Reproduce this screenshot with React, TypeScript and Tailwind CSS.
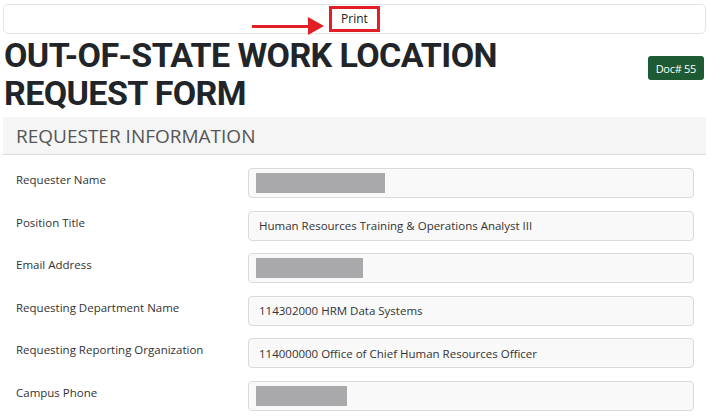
import React from "react";

const ROWS: { label: string; value?: string; redact?: number }[] = [
  { label: "Requester Name", redact: 129 },
  { label: "Position Title", value: "Human Resources Training & Operations Analyst III" },
  { label: "Email Address", redact: 107 },
  { label: "Requesting Department Name", value: "114302000 HRM Data Systems" },
  { label: "Requesting Reporting Organization", value: "114000000 Office of Chief Human Resources Officer" },
  { label: "Campus Phone", redact: 91 },
];

export default function App() {
  return (
    <div className="px-[3px] pt-[4px] bg-white text-[#333]" style={{ fontFamily: '"Open Sans", "Noto Sans", sans-serif' }}>
      {/* print bar */}
      <div className="relative h-[30px] border border-[#e3e3e3] rounded-[5px] flex justify-center">
        <div className="relative">
          <div className="absolute right-[56px] top-[12px] flex items-center">
            <div className="w-[57px] h-[3px] bg-[#e21f26]" />
            <svg width="16" height="18" viewBox="0 0 16 18" className="-ml-[1px]">
              <polygon points="0,0 16,9 0,18" fill="#e21f26" />
            </svg>
          </div>
          <button className="-mt-[1px] h-[26px] w-[51px] border-[3px] border-[#e21f26] bg-white text-[12px] text-[#222] leading-none">Print</button>
        </div>
      </div>

      {/* title */}
      <div className="flex items-start justify-between pl-[1px] pt-[2px]">
        <h1 className="text-[34px] leading-[38px] font-bold text-[#212529] tracking-[-0.6px]" style={{ fontFamily: "Roboto, sans-serif" }}>
          OUT-OF-STATE WORK LOCATION
          <br />
          REQUEST FORM
        </h1>
        <span className="mt-[20px] mr-[2px] h-[24px] flex items-center bg-[#1d5b34] text-white text-[11px] leading-none rounded-[3px] px-[8px] tracking-[-0.3px]">Doc# 55</span>
      </div>

      {/* section */}
      <div className="mt-[5px] h-[38px] bg-[#f5f5f5] border-b border-[#dcdcdc] flex items-center pl-[13px]">
        <h2 className="text-[19px] text-[#555] leading-none pt-[1px]">REQUESTER INFORMATION</h2>
      </div>

      <div className="pt-[13px] pl-[13px] pr-[12px] flex flex-col gap-[12.6px]">
        {ROWS.map((r) => (
          <div key={r.label} className="flex items-start">
            <div className="w-[232px] text-[11.5px] text-[#333] pt-[3px]">{r.label}</div>
            <div className="flex-1 h-[30px] bg-[#f9f9f9] border border-[#dadada] rounded-[4px] flex items-center pl-[10px] text-[11.5px] text-[#333]">
              {r.redact ? <div className="h-[20px] bg-[#a9a9ac] -ml-[3px]" style={{ width: r.redact }} /> : r.value}
            </div>
          </div>
        ))}
      </div>
    </div>
  );
}
